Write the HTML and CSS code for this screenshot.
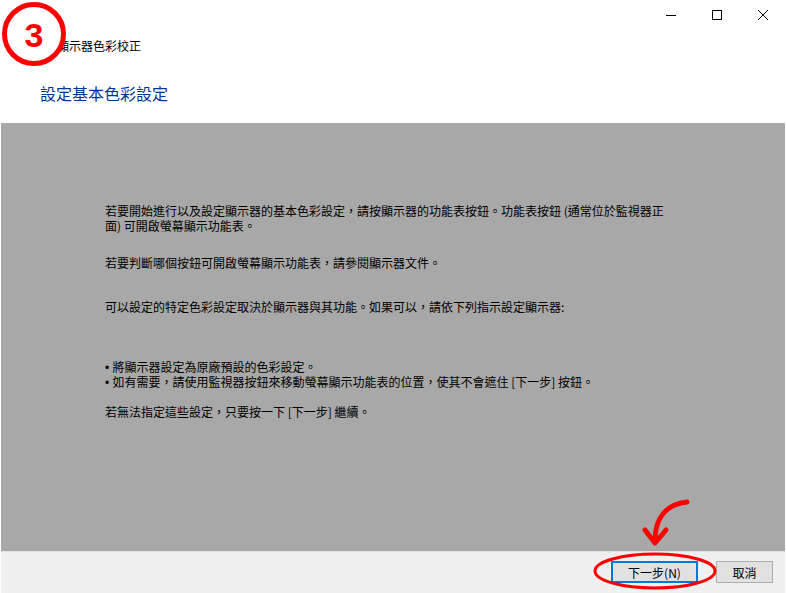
FILE: index.html
```html
<!DOCTYPE html>
<html lang="zh-Hant">

<head>
    <meta charset="UTF-8">
    <meta name="viewport" content="width=device-width, initial-scale=1.0">
    <title>顯示器色彩校正</title>
    <link rel="stylesheet" href="styles.css">
</head>

<body>

    <div class="window">
        <div class="titlebar">
            <div class="caption-btn">
                <svg width="10" height="10" viewBox="0 0 10 10"><line x1="0" y1="5.5" x2="10" y2="5.5" stroke="#000" stroke-width="1" /></svg>
            </div>
            <div class="caption-btn">
                <svg width="10" height="10" viewBox="0 0 10 10"><rect x="0.5" y="0.5" width="9" height="9" fill="none" stroke="#000" stroke-width="1" /></svg>
            </div>
            <div class="caption-btn">
                <svg width="10" height="10" viewBox="0 0 10 10"><path d="M0 0 L10 10 M10 0 L0 10" stroke="#000" stroke-width="1" /></svg>
            </div>
        </div>

        <div class="nav">
            <span class="nav-title">顯示器色彩校正</span>
        </div>

        <h1 class="instruction">設定基本色彩設定</h1>

        <div class="panel">
            <p class="p1">若要開始進行以及設定顯示器的基本色彩設定，請按顯示器的功能表按鈕。功能表按鈕 (通常位於監視器正<br>面) 可開啟螢幕顯示功能表。</p>
            <p class="p2">若要判斷哪個按鈕可開啟螢幕顯示功能表，請參閱顯示器文件。</p>
            <p class="p3">可以設定的特定色彩設定取決於顯示器與其功能。如果可以，請依下列指示設定顯示器:</p>
            <p class="p4"><span class="bullet">• </span>將顯示器設定為原廠預設的色彩設定。<br><span class="bullet">• </span>如有需要，請使用監視器按鈕來移動螢幕顯示功能表的位置，使其不會遮住 [下一步] 按鈕。</p>
            <p class="p5">若無法指定這些設定，只要按一下 [下一步] 繼續。</p>
        </div>

        <div class="footer">
            <button class="btn btn-default">下一步(N)</button>
            <button class="btn btn-cancel">取消</button>
        </div>
    </div>

    <!-- red annotations drawn on top of the screenshot -->
    <svg class="marks" width="786" height="593" viewBox="0 0 786 593">
        <circle cx="34" cy="34" r="29.5" fill="#fff" stroke="#ff0000" stroke-width="5" />
        <text x="34" y="46.5" text-anchor="middle" class="mark-num">3</text>
        <ellipse cx="655" cy="571" rx="60" ry="17" fill="none" stroke="#ff0000" stroke-width="3" />
        <path d="M687 502 C668 504 655 516 655 541" fill="none" stroke="#ff0000" stroke-width="5" stroke-linecap="round" />
        <path d="M645 530 L655 543 L666 530" fill="none" stroke="#ff0000" stroke-width="5" stroke-linecap="round" stroke-linejoin="round" />
    </svg>

</body>

</html>
```

FILE: styles.css
```css
body {
    margin: 0;
    width: 786px;
    height: 593px;
    overflow: hidden;
    background-color: #fff;
    font-family: "Noto Sans CJK TC", "Liberation Sans", sans-serif;
    font-size: 12px;
    color: #000;
    position: relative;
}

.window {
    display: flex;
    flex-direction: column;
    height: 593px;
}

.titlebar {
    display: flex;
    justify-content: flex-end;
    height: 30px;
}

.caption-btn {
    width: 46px;
    height: 30px;
    display: flex;
    align-items: center;
    justify-content: center;
}

.nav {
    height: 32px;
    display: flex;
    align-items: center;
    padding-left: 57px;
}

.nav-title {
    font-size: 12px;
    line-height: 16px;
}

.instruction {
    margin: 0;
    padding: 20px 0 0 40px;
    height: 41px;
    font-size: 16px;
    font-weight: normal;
    line-height: 22px;
    color: #003399;
}

.panel {
    margin: 0 1px;
    height: 428px;
    background-color: #a8a8a8;
    padding: 80px 0 0 104px;
    box-sizing: border-box;
}

.panel p {
    margin: 0;
    line-height: 15px;
}

.bullet {
    font-family: "Liberation Sans", Arial, sans-serif;
    line-height: 1;
}

.p2 {
    margin-top: 22px !important;
}

.p3 {
    margin-top: 29px !important;
}

.p4 {
    margin-top: 45px !important;
}

.p5 {
    margin-top: 15px !important;
}

.footer {
    flex: 1;
    margin: 0 1px;
    background-color: #f0f0f0;
    border-top: 1px solid #e3e3e3;
    display: flex;
    justify-content: flex-end;
    align-items: flex-start;
    padding: 9px 12px 0 0;
    gap: 18px;
}

.btn {
    height: 22px;
    padding: 0;
    font-family: "Noto Sans CJK TC", "Liberation Sans", sans-serif;
    font-size: 12px;
    color: #000;
    background-color: #e1e1e1;
    box-sizing: border-box;
}

.btn-default {
    width: 87px;
    border: 2px solid #0078d7;
}

.btn-cancel {
    width: 57px;
    border: 1px solid #adadad;
}

.marks {
    position: absolute;
    left: 0;
    top: 0;
    pointer-events: none;
}

.mark-num {
    font-family: "Liberation Sans", Arial, sans-serif;
    font-weight: bold;
    font-size: 34px;
    fill: #ff0000;
}
```
